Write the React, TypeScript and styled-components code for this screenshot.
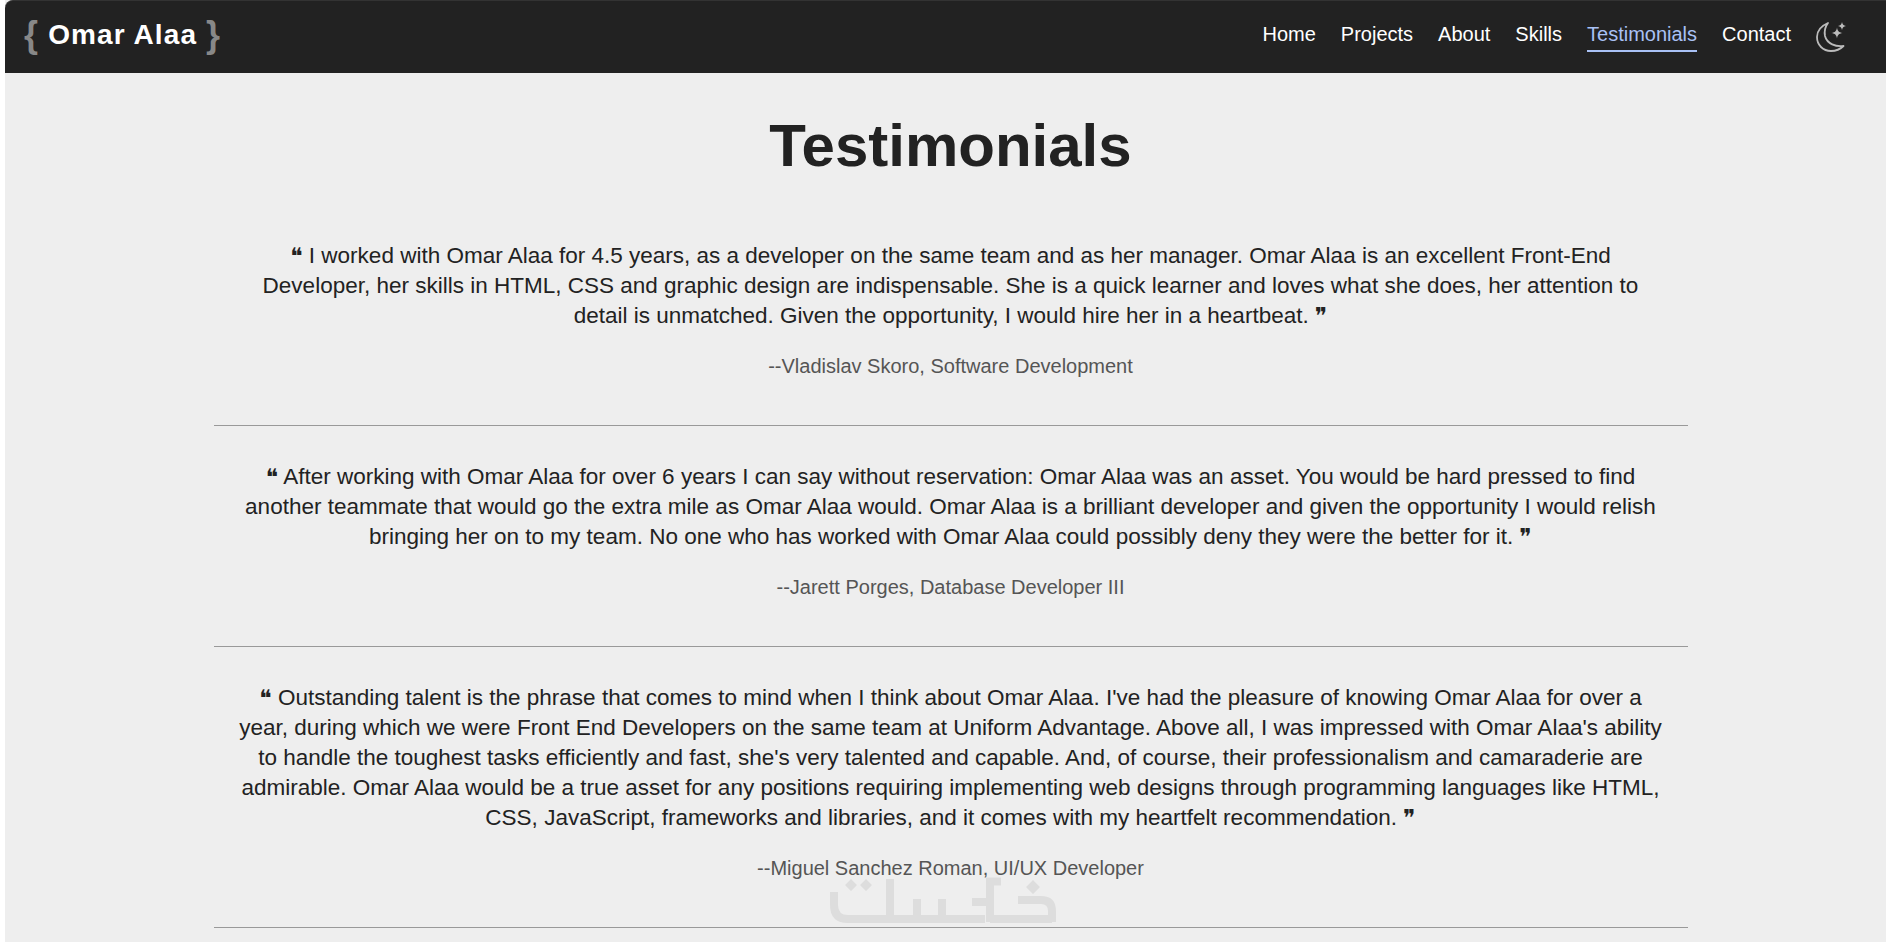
import React from 'react';
import styled, {createGlobalStyle} from 'styled-components';

const GlobalStyle = createGlobalStyle`
    html, body {
        margin: 0;
        padding: 0;
        height: 100%;
        overflow: hidden;
        background-color: #FFFFFF;
    }
    body {
        font-family: "Liberation Sans", Arial, sans-serif;
    }
`;

const Page = styled.div`
    margin-left: 5px;
    height: 942px;
    background-color: #EEEEEE;
    overflow: hidden;
    position: relative;
`;

const NavBar = styled.nav`
    display: flex;
    align-items: center;
    justify-content: space-between;
    height: 73px;
    box-sizing: border-box;
    padding: 0 38px 2px 19px;
    background-color: #222222;
    border-top: 1px solid #333333;
    border-top-left-radius: 8px;
`;

const Logo = styled.div`
    display: flex;
    align-items: center;
    gap: 9px;
    font-size: 28px;
    font-weight: 700;
    letter-spacing: 1.1px;
    color: #FFFFFF;
    margin-bottom: 2px;
`;

const Brace = styled.span`
    font-size: 36px;
    font-weight: 700;
    color: #888888;
`;

const NavLinks = styled.ul`
    display: flex;
    align-items: center;
    gap: 25px;
    margin: 0;
    padding: 0;
    list-style: none;
`;

const NavLink = styled.li<{$active?: boolean}>`
    padding-bottom: 3px;
    font-size: 20px;
    line-height: 26px;
    color: ${(props) => (props.$active ? '#A9C1F5' : '#FFFFFF')};
    border-bottom: 2px solid ${(props) => (props.$active ? '#A9C1F5' : 'transparent')};
`;

const ThemeIcon = styled.svg`
    display: block;
    width: 32px;
    height: 32px;
    color: #BBBBBB;
`;

const Main = styled.main`
    width: 1474px;
    margin: 0 auto;
    transform: translateX(5px);
`;

const Title = styled.h1`
    margin: 38px 0 60px;
    text-align: center;
    font-size: 60px;
    line-height: 70px;
    font-weight: 700;
    color: #222222;
`;

const Testimonial = styled.article`
    padding: 0 24px 46px;
    margin-bottom: 36px;
    border-bottom: 1px solid #999999;
    text-align: center;
`;

const Quote = styled.p`
    margin: 0 0 22px;
    font-size: 22.5px;
    line-height: 30px;
    color: #222222;
`;

const QuoteMark = styled.span`
    font-size: 23px;
    line-height: 0;
    font-family: "DejaVu Sans", sans-serif;
    vertical-align: -1px;
`;

const Author = styled.p`
    margin: 0;
    font-size: 20px;
    line-height: 26px;
    color: #555555;
`;

const Watermark = styled.svg`
    position: absolute;
    left: 815px;
    bottom: 7px;
    width: 250px;
    height: 60px;
    color: #DDDDDD;
`;

const testimonials = [
    {
        text: 'I worked with Omar Alaa for 4.5 years, as a developer on the same team and as her manager. Omar Alaa is an excellent Front-End Developer, her skills in HTML, CSS and graphic design are indispensable. She is a quick learner and loves what she does, her attention to detail is unmatched. Given the opportunity, I would hire her in a heartbeat.',
        author: '--Vladislav Skoro, Software Development',
    },
    {
        text: 'After working with Omar Alaa for over 6 years I can say without reservation: Omar Alaa was an asset. You would be hard pressed to find another teammate that would go the extra mile as Omar Alaa would. Omar Alaa is a brilliant developer and given the opportunity I would relish bringing her on to my team. No one who has worked with Omar Alaa could possibly deny they were the better for it.',
        author: '--Jarett Porges, Database Developer III',
    },
    {
        text: "Outstanding talent is the phrase that comes to mind when I think about Omar Alaa. I've had the pleasure of knowing Omar Alaa for over a year, during which we were Front End Developers on the same team at Uniform Advantage. Above all, I was impressed with Omar Alaa's ability to handle the toughest tasks efficiently and fast, she's very talented and capable. And, of course, their professionalism and camaraderie are admirable. Omar Alaa would be a true asset for any positions requiring implementing web designs through programming languages like HTML, CSS, JavaScript, frameworks and libraries, and it comes with my heartfelt recommendation.",
        author: '--Miguel Sanchez Roman, UI/UX Developer',
    },
];

const links = ['Home', 'Projects', 'About', 'Skills', 'Testimonials', 'Contact'];

const MoonIcon = () => (
    <ThemeIcon viewBox='0 0 32 32' fill='none' stroke='currentColor' strokeWidth='1.8' strokeLinejoin='round'>
        <path d='M12 3C5 6 1 11 1 17c0 8 6 14 14 14 6 0 10-2.500 12.500-5-7.500 1-16.500-2-18.500-10-1-5 0-9 3-13z'/>
        <path fill='currentColor' stroke='none' d='M21 7.500c.6 3.400 1.600 4.900 5.500 5.500-3.900.6-4.900 2.100-5.500 5.500-.6-3.400-1.600-4.900-5.500-5.500 3.900-.6 4.900-2.100 5.500-5.500z'/>
        <path fill='currentColor' stroke='none' d='M26 2c.4 2.400 1.500 3.600 4 4-2.500.4-3.600 1.600-4 4-.4-2.400-1.500-3.600-4-4 2.500-.4 3.600-1.600 4-4z'/>
    </ThemeIcon>
);

const WatermarkLogo = () => (
    <Watermark viewBox='0 0 250 60' fill='none' stroke='currentColor' strokeWidth='8'>
        <path d='M14 17v13q0 14 14 14h137'/>
        <path d='M70 4v40'/>
        <path d='M97 24v20M122 24v20'/>
        <path d='M181 6.500h-11V47'/>
        <path d='M152 27h18'/>
        <path d='M198 25h23q11 0 11 11v11M232 44h-62'/>
        <path fill='currentColor' stroke='none' d='M31 4l6 6-6 6-6-6zM46 4l6 6-6 6-6-6zM213 5l7 7-7 7-7-7z'/>
    </Watermark>
);

const App = () => {
    return (
        <Page>
            <GlobalStyle/>
            <NavBar>
                <Logo>
                    <Brace>{'{'}</Brace>
                    {'Omar Alaa'}
                    <Brace>{'}'}</Brace>
                </Logo>
                <NavLinks>
                    {links.map((link) => (
                        <NavLink key={link} $active={link === 'Testimonials'}>{link}</NavLink>
                    ))}
                    <li><MoonIcon/></li>
                </NavLinks>
            </NavBar>
            <Main>
                <Title>{'Testimonials'}</Title>
                {testimonials.map((item) => (
                    <Testimonial key={item.author}>
                        <Quote>
                            <QuoteMark>{'❝'}</QuoteMark>{' '}{item.text}{' '}<QuoteMark>{'❞'}</QuoteMark>
                        </Quote>
                        <Author>{item.author}</Author>
                    </Testimonial>
                ))}
            </Main>
            <WatermarkLogo/>
        </Page>
    );
};

export default App;
